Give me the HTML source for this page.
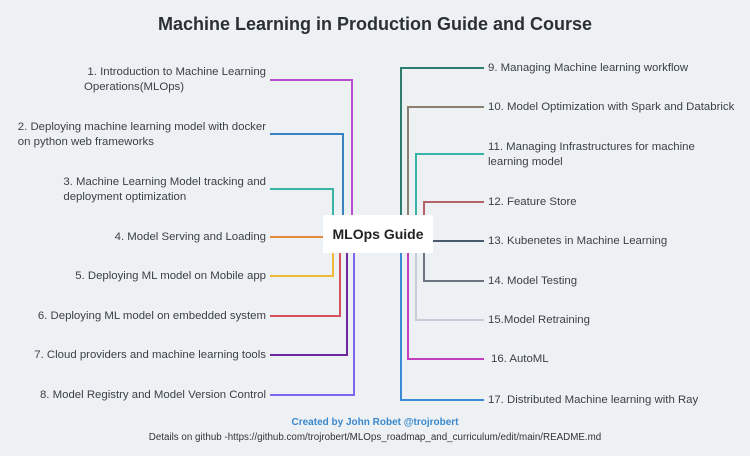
<!DOCTYPE html>
<html><head><meta charset="utf-8"><style>
body{margin:0;width:750px;height:456px;background:#eef1f4;position:relative;overflow:hidden;font-family:"Liberation Sans",sans-serif;color:#3a3f47}
.t{position:absolute;font-size:11.4px;line-height:15px;white-space:nowrap}
.l{text-align:right;right:484px}
.r{left:488px}
h1{position:absolute;top:14px;left:0;width:750px;text-align:center;margin:0;font-size:18px;color:#2b2f36}
.box{position:absolute;left:323px;top:215px;width:110px;height:38px;background:#fff;font-weight:bold;font-size:14px;line-height:38px;text-align:center;color:#222}
svg{position:absolute;left:0;top:0}
</style></head><body>
<h1>Machine Learning in Production Guide and Course</h1>
<svg width="750" height="456" fill="none" stroke-width="2">
<path d="M270 80H352V215" stroke="#b84fd0"/>
<path d="M270 134H343V215" stroke="#3b82c4"/>
<path d="M270 189H333V215" stroke="#3ab5a5"/>
<path d="M270 237H323" stroke="#e58a3a"/>
<path d="M270 276H333V253" stroke="#f0b93a"/>
<path d="M270 316H340V253" stroke="#d9505e"/>
<path d="M270 355H347V253" stroke="#6a2a9a"/>
<path d="M270 395H354V253" stroke="#7b68ee"/>
<path d="M484 68H401V215" stroke="#2e7d6e"/>
<path d="M484 107H408V215" stroke="#8a7f70"/>
<path d="M484 154H416V215" stroke="#36b5a8"/>
<path d="M484 202H424V215" stroke="#b5636a"/>
<path d="M433 241H484" stroke="#4a5a6e"/>
<path d="M484 281H424V253" stroke="#6b7480"/>
<path d="M484 320H416V253" stroke="#c8cbd8"/>
<path d="M484 359H408V253" stroke="#c33fc0"/>
<path d="M484 400H401V253" stroke="#3a8ad6"/>
</svg>
<div class="box">MLOps Guide</div>
<div class="t l" style="top:65px">1. Introduction to Machine Learning<br><span style="display:inline-block;width:182px;text-align:left">Operations(MLOps)</span></div>
<div class="t l" style="top:120px;text-align:left">2. Deploying machine learning model with docker<br>on python web frameworks</div>
<div class="t l" style="top:175px;text-align:left">3. Machine Learning Model tracking and<br>deployment optimization</div>
<div class="t l" style="top:230px">4. Model Serving and Loading</div>
<div class="t l" style="top:269px">5. Deploying ML model on Mobile app</div>
<div class="t l" style="top:309px">6. Deploying ML model on embedded system</div>
<div class="t l" style="top:348px">7. Cloud providers and machine learning tools</div>
<div class="t l" style="top:388px">8. Model Registry and Model Version Control</div>
<div class="t r" style="top:61px">9. Managing Machine learning workflow</div>
<div class="t r" style="top:100px">10. Model Optimization with Spark and Databrick</div>
<div class="t r" style="top:140px">11. Managing Infrastructures for machine<br>learning model</div>
<div class="t r" style="top:195px">12. Feature Store</div>
<div class="t r" style="top:234px">13. Kubenetes in Machine Learning</div>
<div class="t r" style="top:274px">14. Model Testing</div>
<div class="t r" style="top:313px">15.Model Retraining</div>
<div class="t r" style="top:352px;left:491px">16. AutoML</div>
<div class="t r" style="top:393px">17. Distributed Machine learning with Ray</div>
<div class="t" style="top:415px;left:0;width:750px;text-align:center;color:#3a88cc;font-weight:bold;font-size:10px">Created by John Robet @trojrobert</div>
<div class="t" style="top:430px;left:0;width:750px;text-align:center;font-size:9.8px;color:#333">Details on github -https://github.com/trojrobert/MLOps_roadmap_and_curriculum/edit/main/README.md</div>
</body></html>
